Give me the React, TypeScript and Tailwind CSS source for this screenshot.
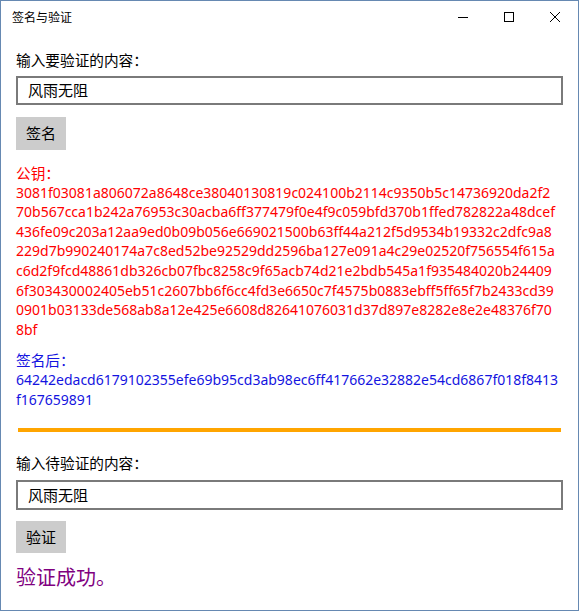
import React from "react";

const pubKey = [
  "3081f03081a806072a8648ce38040130819c024100b2114c9350b5c14736920da2f2",
  "70b567cca1b242a76953c30acba6ff377479f0e4f9c059bfd370b1ffed782822a48dcef",
  "436fe09c203a12aa9ed0b09b056e669021500b63ff44a212f5d9534b19332c2dfc9a8",
  "229d7b990240174a7c8ed52be92529dd2596ba127e091a4c29e02520f756554f615a",
  "c6d2f9fcd48861db326cb07fbc8258c9f65acb74d21e2bdb545a1f935484020b24409",
  "6f303430002405eb51c2607bb6f6cc4fd3e6650c7f4575b0883ebff5ff65f7b2433cd39",
  "0901b03133de568ab8a12e425e6608d82641076031d37d897e8282e8e2e48376f70",
  "8bf",
];

const sig = [
  "64242edacd6179102355efe69b95cd3ab98ec6ff417662e32882e54cd6867f018f8413",
  "f167659891",
];

const cjk = { fontFamily: '"Noto Sans CJK SC", "Noto Sans", sans-serif' };
const hex = { fontFamily: '"Noto Sans", "Noto Sans CJK SC", sans-serif' };

export default function App() {
  return (
    <div
      className="w-[579px] h-[611px] border border-[#6689b2] bg-white flex flex-col text-black overflow-hidden"
      style={cjk}
    >
      {/* Title bar */}
      <div className="h-[31px] flex items-center shrink-0">
        <div className="pl-[11px] text-[12px] leading-none flex-1">签名与验证</div>
        <div className="flex items-center h-full">
          <div className="w-[46px] h-full flex items-center justify-center">
            <svg width="10" height="10" viewBox="0 0 10 10">
              <line x1="0" y1="5.5" x2="10" y2="5.5" stroke="#000" strokeWidth="1" />
            </svg>
          </div>
          <div className="w-[46px] h-full flex items-center justify-center">
            <svg width="10" height="10" viewBox="0 0 10 10">
              <rect x="0.5" y="0.5" width="9" height="9" fill="none" stroke="#000" strokeWidth="1" />
            </svg>
          </div>
          <div className="w-[46px] h-full flex items-center justify-center">
            <svg width="10" height="10" viewBox="0 0 10 10">
              <path d="M0 0 L10 10 M10 0 L0 10" stroke="#000" strokeWidth="1" />
            </svg>
          </div>
        </div>
      </div>

      <div className="px-[15px] flex flex-col">
        <div className="mt-[18px] text-[14.67px] leading-[20px]">输入要验证的内容：</div>
        <div className="mt-[6px] h-[29px] border-2 border-[#7a7a7a] flex items-center pl-[10px] text-[15px]">
          风雨无阻
        </div>
        <div className="mt-[12px] w-[50px] h-[33px] bg-[#cccccc] flex items-center justify-center text-[15px]">
          签名
        </div>

        <div className="mt-[13px] text-[#ff0000] text-[14px] leading-[19.6px]">
          <div className="text-[14.67px]" style={cjk}>公钥：</div>
          {pubKey.map((l, i) => (
            <div key={i} className="whitespace-nowrap" style={hex}>
              {l}
            </div>
          ))}
        </div>

        <div className="mt-[11px] text-[#1414e0] text-[14px] leading-[19.6px]">
          <div className="text-[14.67px]" style={cjk}>签名后：</div>
          {sig.map((l, i) => (
            <div key={i} className="whitespace-nowrap" style={hex}>
              {l}
            </div>
          ))}
        </div>

        <div className="mt-[19px] mx-[2px] h-[4px] bg-[#ffa500]" />

        <div className="mt-[21px] text-[14.67px] leading-[20px]">输入待验证的内容：</div>
        <div className="mt-[7px] h-[30px] border-2 border-[#7a7a7a] flex items-center pl-[10px] text-[15px]">
          风雨无阻
        </div>
        <div className="mt-[11px] w-[50px] h-[32px] bg-[#cccccc] flex items-center justify-center text-[15px]">
          验证
        </div>
        <div className="mt-[11px] text-[20px] leading-[26px] text-[#800080]">验证成功。</div>
      </div>
    </div>
  );
}
